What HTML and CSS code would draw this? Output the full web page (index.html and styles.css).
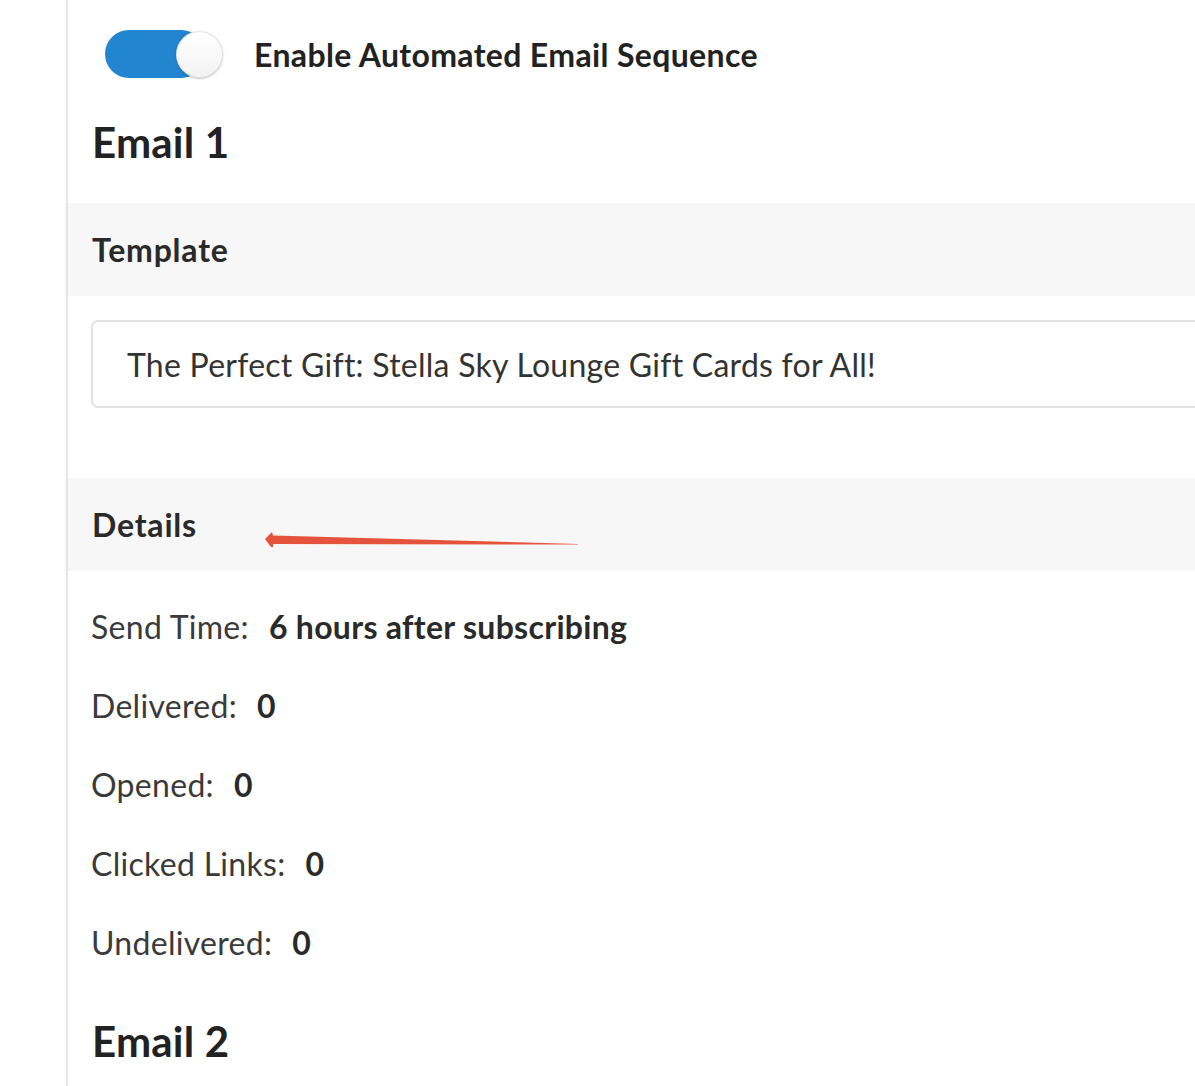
FILE: index.html
```html
<!DOCTYPE html>
<html>
<head>
<meta charset="utf-8">
<link rel="stylesheet" href="styles.css">
</head>
<body>
<div class="page">
  <div class="gutter"></div>
  <main class="content">
    <div class="toggle-row">
      <span class="toggle"><span class="knob"></span></span>
      <span class="toggle-label">Enable Automated Email Sequence</span>
    </div>
    <h2 class="email-title">Email 1</h2>
    <div class="band"><span class="band-title">Template</span></div>
    <div class="input-wrap">
      <div class="input-box">The Perfect Gift: Stella Sky Lounge Gift Cards for All!</div>
    </div>
    <div class="band details-band">
      <span class="band-title">Details</span>
      <svg class="arrow" width="320" height="20" viewBox="0 0 320 20">
        <polygon points="0,8 7,1 8,4.5 313,13 313,13.6 8,13 8,16 6,16" fill="#e5533d"/>
      </svg>
    </div>
    <div class="stats">
      <div class="stat"><span class="k">Send Time:</span><span class="v">6 hours after subscribing</span></div>
      <div class="stat"><span class="k">Delivered:</span><span class="v">0</span></div>
      <div class="stat"><span class="k">Opened:</span><span class="v">0</span></div>
      <div class="stat"><span class="k">Clicked Links:</span><span class="v">0</span></div>
      <div class="stat"><span class="k">Undelivered:</span><span class="v">0</span></div>
    </div>
    <h2 class="email-title email-2">Email 2</h2>
  </main>
</div>
</body>
</html>
```
FILE: styles.css
```css
html, body {
  margin: 0;
  padding: 0;
  background: #ffffff;
  overflow: hidden;
}
body {
  font-family: Lato, "Noto Sans", sans-serif;
  color: #2e2e2e;
}
.page {
  display: flex;
  width: 1400px;
  height: 1086px;
}
.gutter {
  width: 66px;
  flex: none;
}
.content {
  flex: 1;
  border-left: 2px solid #e6e6e6;
  box-shadow: -1px 0 2px rgba(0,0,0,0.04);
}
.toggle-row {
  display: flex;
  align-items: center;
  height: 50px;
  margin-top: 29px;
  padding-left: 37px;
}
.toggle {
  position: relative;
  display: block;
  width: 118px;
  height: 50px;
  flex: none;
}
.toggle::before {
  content: "";
  position: absolute;
  left: 0;
  top: 1px;
  width: 100px;
  height: 48px;
  border-radius: 24px;
  background: #2185d0;
}
.knob {
  position: absolute;
  right: 0;
  top: 2px;
  width: 47px;
  height: 47px;
  border-radius: 50%;
  background: linear-gradient(#ffffff, #f3f3f3);
  box-shadow: 0 1px 2px rgba(34,36,38,0.25), 0 0 0 1px rgba(34,36,38,0.12) inset;
}
.toggle-label {
  margin-left: 31px;
  font-size: 32px;
  font-weight: 700;
  letter-spacing: 0.35px;
  color: #222;
}
.email-title {
  margin: 0;
  padding-left: 24px;
  font-size: 42px;
  font-weight: 700;
  letter-spacing: 0.2px;
  line-height: 50px;
  color: #222;
  margin-top: 38px;
}
.band {
  display: flex;
  align-items: center;
  height: 93px;
  background: #f7f7f7;
  padding-left: 24px;
  margin-top: 36px;
}
.band-title {
  font-size: 32px;
  font-weight: 700;
  letter-spacing: 0.8px;
  color: #2a2a2a;
}
.input-wrap {
  padding: 24px 0 0 23px;
  height: 182px;
  box-sizing: border-box;
}
.input-box {
  height: 88px;
  box-sizing: border-box;
  border: 2px solid #e2e2e2;
  border-radius: 7px;
  display: flex;
  align-items: center;
  padding-left: 34px;
  font-size: 32px;
  letter-spacing: 0.25px;
  color: #333;
}
.details-band {
  margin-top: 0;
  position: relative;
}
.arrow {
  position: absolute;
  left: 197px;
  top: 53px;
}
.stats {
  padding-left: 23px;
  padding-top: 35px;
}
.stat {
  height: 79px;
  line-height: 42px;
  font-size: 32px;
  letter-spacing: 0.3px;
}
.stat .k {
  color: #3a3a3a;
}
.stat .v {
  font-weight: 700;
  margin-left: 20px;
  color: #2a2a2a;
}
.email-2 {
  margin-top: 15px;
}
```
